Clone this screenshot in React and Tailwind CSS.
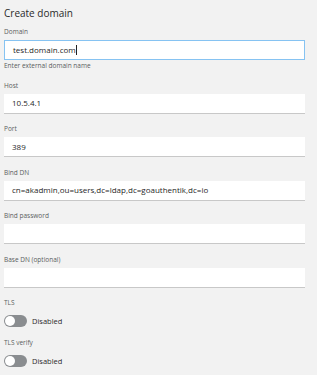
import React from 'react'

function Field({ label, value, focused, helper, first }) {
  return (
    <div>
      <div className={`${first ? 'mt-[9px]' : 'mt-[11.5px]'} h-[8px] text-[6.5px] leading-[8px] text-[#5a5d60]`}>{label}</div>
      <div
        className={`mt-[4px] flex h-[20px] items-center bg-white pl-[8px] text-[8px] text-[#1f1f1f] ${
          focused ? 'border border-[#86c3f2]' : 'border-b border-[#c8c8c8]'
        }`}
      >
        {value}
        {focused && <span className="ml-[0.5px] inline-block h-[10px] w-px bg-[#222]" />}
      </div>
      {helper && <div className="mt-[2px] h-[8px] text-[6.5px] leading-[8px] text-[#5a5d60]">{helper}</div>}
    </div>
  )
}

function Toggle({ label, mt }) {
  return (
    <div>
      <div className={`${mt} h-[8px] text-[6.5px] leading-[8px] text-[#5a5d60]`}>{label}</div>
      <div className="mt-[8px] flex items-center gap-[5px]">
        <div className="flex h-[12px] w-[23px] items-center rounded-full bg-[#8a8d90] px-[1px]">
          <div className="h-[10px] w-[10px] rounded-full bg-white" />
        </div>
        <span className="text-[7.5px] leading-[12px] text-[#2a2a2a]">Disabled</span>
      </div>
    </div>
  )
}

export default function App() {
  return (
    <div className="min-h-[375px] w-[317px] bg-[#f2f2f2] pl-[4px] pr-[12px] pt-[7px] font-['Open_Sans',sans-serif]">
      <h1 className="h-[12px] text-[10px] leading-[12px] text-[#2a2a2a]">Create domain</h1>
      <Field first label="Domain" value="test.domain.com" focused helper="Enter external domain name" />
      <Field label="Host" value="10.5.4.1" />
      <Field label="Port" value="389" />
      <Field label="Bind DN" value="cn=akadmin,ou=users,dc=ldap,dc=goauthentik,dc=io" />
      <Field label="Bind password" value="" />
      <Field label="Base DN (optional)" value="" />
      <Toggle label="TLS" mt="mt-[11px]" />
      <Toggle label="TLS verify" mt="mt-[12.5px]" />
    </div>
  )
}
